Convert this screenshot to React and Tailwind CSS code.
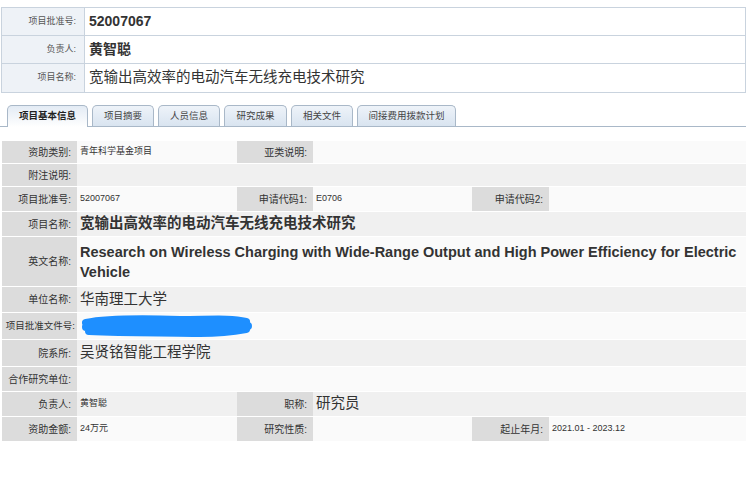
import React from 'react'

const font = { fontFamily: '"Liberation Sans", "Noto Sans CJK SC", sans-serif' }

const tabs = ['项目基本信息', '项目摘要', '人员信息', '研究成果', '相关文件', '间接费用拨款计划']
const tabW = ['w-[81px]', 'w-[62px]', 'w-[62px]', 'w-[63px]', 'w-[62px]', 'w-[99px]']

function TopRow({ label, children, h, last }) {
  return (
    <div className={`flex ${h} ${last ? '' : 'border-b border-[#c9d3de]'}`}>
      <div className="w-[83px] shrink-0 bg-[#eef2f7] border-r border-[#c9d3de] flex items-center justify-end pr-[8px] text-[9px] text-[#555]">
        {label}
      </div>
      <div className="flex-1 bg-white flex items-center pl-[4px] text-[#333]">{children}</div>
    </div>
  )
}

function Label({ children, w, tight }) {
  return (
    <div
      className={`${w} shrink-0 bg-[#dcdcdc] flex items-center justify-end whitespace-nowrap ${
        tight ? 'pr-[2px] text-[9.5px]' : 'pr-[6px] text-[10px]'
      } text-[#333]`}
    >
      {children}
    </div>
  )
}

function Row({ h, bg, children }) {
  return <div className={`flex ${h} ${bg} border-b border-white`}>{children}</div>
}

function Val({ w, children, className = 'text-[9px]' }) {
  return <div className={`${w} shrink-0 flex items-center pl-[3px] text-[#333] ${className}`}>{children}</div>
}

export default function App() {
  const a = 'bg-[#fafafa]'
  const b = 'bg-[#f0f0f0]'
  return (
    <div className="w-[750px] h-[481px] bg-white overflow-hidden" style={font}>
      <div className="pt-[7px] pl-[1px] pr-[4px]">
        <div className="border border-[#c9d3de]">
          <TopRow label="项目批准号:" h="h-[28px]">
            <span className="text-[14px] font-bold">52007067</span>
          </TopRow>
          <TopRow label="负责人:" h="h-[28px]">
            <span className="text-[14px] font-bold">黄智聪</span>
          </TopRow>
          <TopRow label="项目名称:" h="h-[28px]" last>
            <span className="text-[14.5px]">宽输出高效率的电动汽车无线充电技术研究</span>
          </TopRow>
        </div>
      </div>

      <div className="mt-[13px] flex items-end gap-[4px] pl-[7px] border-b border-[#a9b8c8] h-[21px] mr-[4px]">
        {tabs.map((t, i) => (
          <div
            key={t}
            className={`${tabW[i]} h-[21px] flex items-center justify-center text-[9.5px] rounded-t-[5px] border border-b-0 border-[#a9b8c8] ${
              i === 0
                ? 'bg-gradient-to-b from-[#e3ebf4] to-white font-bold text-[#222] h-[22px] -mb-px'
                : 'bg-gradient-to-b from-[#eef3f9] to-[#d9e4f0] text-[#444]'
            }`}
          >
            {t}
          </div>
        ))}
      </div>

      <div className="mt-[14px] pl-[2px] pr-[4px]">
        <Row h="h-[23px]" bg={a}>
          <Label w="w-[75px]">资助类别:</Label>
          <Val w="w-[160px]">青年科学基金项目</Val>
          <Label w="w-[76px]">亚类说明:</Label>
        </Row>
        <Row h="h-[23px]" bg={b}>
          <Label w="w-[75px]">附注说明:</Label>
        </Row>
        <Row h="h-[25px]" bg={a}>
          <Label w="w-[75px]">项目批准号:</Label>
          <Val w="w-[160px]">52007067</Val>
          <Label w="w-[76px]">申请代码1:</Label>
          <Val w="w-[159px]">E0706</Val>
          <Label w="w-[77px]">申请代码2:</Label>
        </Row>
        <Row h="h-[25px]" bg={b}>
          <Label w="w-[75px]">项目名称:</Label>
          <Val w="flex-1" className="text-[14.5px] font-bold">宽输出高效率的电动汽车无线充电技术研究</Val>
        </Row>
        <Row h="h-[50px]" bg={a}>
          <Label w="w-[75px]">英文名称:</Label>
          <Val w="flex-1" className="text-[14.5px] font-bold leading-[20px] pr-[4px]">
            Research on Wireless Charging with Wide-Range Output and High Power Efficiency for Electric Vehicle
          </Val>
        </Row>
        <Row h="h-[26px]" bg={b}>
          <Label w="w-[75px]">单位名称:</Label>
          <Val w="flex-1" className="text-[14.5px]">华南理工大学</Val>
        </Row>
        <Row h="h-[27px]" bg={a}>
          <Label w="w-[75px]" tight>项目批准文件号:</Label>
          <Val w="flex-1">
            <svg width="175" height="24" viewBox="0 0 175 24">
              <path
                d="M6 9 C30 4 70 5 100 6 C130 6 150 4 166 8 M6 13 C50 11 110 12 168 12 M9 17 C50 19 90 18 120 19 C140 19 150 18 166 15"
                fill="none"
                stroke="#1e8fff"
                strokeWidth="8"
                strokeLinecap="round"
                strokeLinejoin="round"
              />
            </svg>
          </Val>
        </Row>
        <Row h="h-[27px]" bg={b}>
          <Label w="w-[75px]">院系所:</Label>
          <Val w="flex-1" className="text-[14.5px]">吴贤铭智能工程学院</Val>
        </Row>
        <Row h="h-[25px]" bg={a}>
          <Label w="w-[75px]">合作研究单位:</Label>
        </Row>
        <Row h="h-[25px]" bg={b}>
          <Label w="w-[75px]">负责人:</Label>
          <Val w="w-[160px]">黄智聪</Val>
          <Label w="w-[76px]">职称:</Label>
          <Val w="w-[159px]" className="text-[14.5px]">研究员</Val>
        </Row>
        <Row h="h-[25px]" bg={a}>
          <Label w="w-[75px]">资助金额:</Label>
          <Val w="w-[160px]">24万元</Val>
          <Label w="w-[76px]">研究性质:</Label>
          <Val w="w-[159px]"></Val>
          <Label w="w-[77px]">起止年月:</Label>
          <Val w="flex-1">2021.01 - 2023.12</Val>
        </Row>
      </div>
    </div>
  )
}
